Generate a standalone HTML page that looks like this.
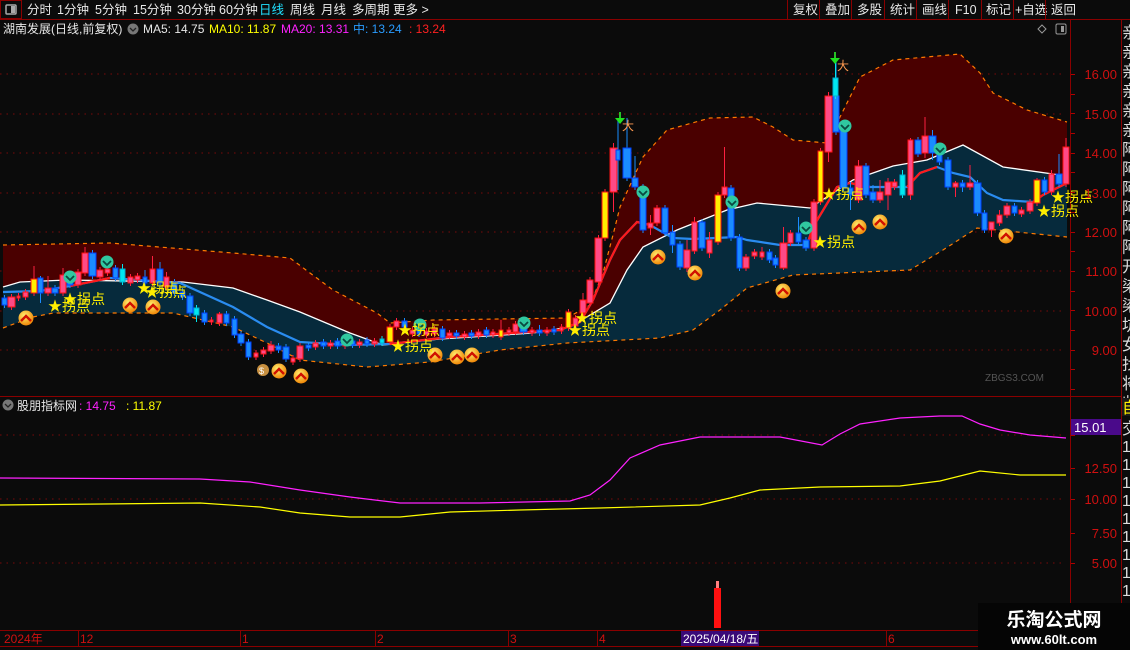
<!DOCTYPE html>
<html><head><meta charset="utf-8"><style>
html,body{margin:0;padding:0;background:#0b0b0b;width:1130px;height:650px;overflow:hidden}
svg{display:block}
text{font-family:"Liberation Sans","Noto Sans CJK SC",sans-serif}
</style></head><body>
<svg id="s" width="1130" height="650" viewBox="0 0 1130 650" xmlns="http://www.w3.org/2000/svg">
<rect width="1130" height="650" fill="#0b0b0b"/>
<rect x="0.5" y="0.5" width="21" height="18" fill="none" stroke="#8a0000"/>
<rect x="6" y="5" width="10" height="9" fill="none" stroke="#aaa" stroke-width="1.5" rx="1"/><rect x="11" y="6" width="4" height="7" fill="#aaa"/>
<g font-size="12.5" fill="#e8e8e8">
<text x="27" y="14">分时</text><text x="57" y="14">1分钟</text><text x="95" y="14">5分钟</text><text x="133" y="14">15分钟</text><text x="177" y="14">30分钟</text><text x="219" y="14">60分钟</text>
<text x="259" y="14" fill="#20e0ff">日线</text><text x="290" y="14">周线</text><text x="321" y="14">月线</text><text x="352" y="14">多周期</text><text x="393" y="14">更多 &gt;</text>
<text x="793" y="14">复权</text><text x="825" y="14">叠加</text><text x="857" y="14">多股</text><text x="890" y="14">统计</text><text x="922" y="14">画线</text><text x="955" y="14">F10</text><text x="986" y="14">标记</text><text x="1015" y="14">+自选</text><text x="1051" y="14">返回</text>
</g>
<g stroke="#8a0000" fill="none">
<line x1="0" y1="19.5" x2="1130" y2="19.5"/>
<line x1="787.5" y1="0" x2="787.5" y2="19"/><line x1="819.5" y1="0" x2="819.5" y2="19"/><line x1="851.5" y1="0" x2="851.5" y2="19"/><line x1="884.5" y1="0" x2="884.5" y2="19"/><line x1="916.5" y1="0" x2="916.5" y2="19"/><line x1="948.5" y1="0" x2="948.5" y2="19"/><line x1="981.5" y1="0" x2="981.5" y2="19"/><line x1="1013.5" y1="0" x2="1013.5" y2="19"/><line x1="1045.5" y1="0" x2="1045.5" y2="19"/>
<line x1="1070.5" y1="20" x2="1070.5" y2="630"/><line x1="1121.5" y1="20" x2="1121.5" y2="650"/>
<line x1="0" y1="396.5" x2="1121" y2="396.5"/>
<line x1="0" y1="630.5" x2="1121" y2="630.5"/><line x1="0" y1="646.5" x2="1121" y2="646.5"/>
</g>
<g font-size="12">
<text x="3" y="33" fill="#e8e8e8">湖南发展(日线,前复权)</text>
<circle cx="133" cy="29" r="5.5" fill="#777"/><path d="M130 28l3 3 3-3" stroke="#222" fill="none" stroke-width="1.3"/>
<text x="143" y="33" fill="#e8e8e8">MA5: 14.75</text><text x="209" y="33" fill="#ffff00">MA10: 11.87</text><text x="281" y="33" fill="#ff22ff">MA20: 13.31</text><text x="353" y="33" fill="#2a9cff">中: 13.24</text><text x="409" y="33" fill="#ff2020">: 13.24</text>
</g>
<path d="M1042 25l4 4-4 4-4-4z" stroke="#999" fill="none"/>
<rect x="1056" y="24" width="10" height="10" fill="none" stroke="#999" rx="1.5"/><rect x="1061" y="26" width="3" height="6" fill="#999"/>
<g stroke="#7a0a0a" stroke-dasharray="1.5 5" stroke-width="1">
<line x1="0" y1="74" x2="1066" y2="74"/><line x1="0" y1="114" x2="1066" y2="114"/><line x1="0" y1="153" x2="1066" y2="153"/><line x1="0" y1="193" x2="1066" y2="193"/><line x1="0" y1="232" x2="1066" y2="232"/><line x1="0" y1="271" x2="1066" y2="271"/><line x1="0" y1="311" x2="1066" y2="311"/><line x1="0" y1="350" x2="1066" y2="350"/>
<line x1="0" y1="435" x2="1066" y2="435"/><line x1="0" y1="499" x2="1066" y2="499"/><line x1="0" y1="563" x2="1066" y2="563"/>
</g>
<polygon fill="#4a0000" points="3,245 110,243 233,253 290,258 310,273 333,290 377,313 390,323 433,320 567,318 590,305 603,273 613,235 620,207 643,157 667,130 710,118 753,117 773,127 793,140 827,143 840,117 860,77 893,60 960,54 980,73 993,93 1027,110 1067,122 1067,176 1003,167 963,145 927,160 893,166 853,180 810,208 757,203 727,210 677,230 643,247 627,270 610,303 570,327 533,333 440,339 383,345 350,333 300,312 267,300 233,288 183,282 67,280 20,282 3,287"/>
<polygon fill="#062a3c" points="3,287 20,282 67,280 183,282 233,288 267,300 300,312 350,333 383,345 440,339 533,333 570,327 610,303 627,270 643,247 677,230 727,210 757,203 810,208 853,180 893,166 927,160 963,145 1003,167 1067,176 1067,237 977,228 943,250 910,270 793,275 747,288 720,310 693,330 660,338 567,343 500,350 430,362 367,367 300,360 267,343 233,327 173,313 53,313 33,317 3,328"/>
<g fill="none" stroke="#ff7a00" stroke-dasharray="4 4" stroke-width="1.2">
<polyline points="3,245 110,243 233,253 290,258 310,273 333,290 377,313 390,323 433,320 567,318 590,305 603,273 613,235 620,207 643,157 667,130 710,118 753,117 773,127 793,140 827,143 840,117 860,77 893,60 960,54 980,73 993,93 1027,110 1067,122"/>
<polyline points="3,328 33,317 53,313 173,313 233,327 267,343 300,360 367,367 430,362 500,350 567,343 660,338 693,330 720,310 747,288 793,275 910,270 943,250 977,228 1067,237"/>
</g>
<polyline fill="none" stroke="#fff" stroke-width="1.3" points="3,287 20,282 67,280 183,282 233,288 267,300 300,312 350,333 383,345 440,339 533,333 570,327 610,303 627,270 643,247 677,230 727,210 757,203 810,208 853,180 893,166 927,160 963,145 1003,167 1067,176"/>
<polyline fill="none" stroke="#2a8cf0" stroke-width="2.2" points="3,292 40,291 70,286 110,278 180,283 233,307 267,327 300,342 350,345 390,344 450,337 560,330 580,322 593,300 610,260 620,240 637,222 650,225 673,238 693,239 737,237 747,240 780,245 807,245 813,227 837,187 850,183 870,187 907,187 920,173 937,167 953,173 970,177 987,193 1003,200 1033,202 1043,195 1067,183"/>
<g fill="none" stroke="#ff1a1a" stroke-width="2.2">
<polyline points="70,286 110,278"/>
<polyline points="390,344 450,337 560,330 580,322 593,300 610,260 620,240 637,222 650,225"/>
<polyline points="807,245 813,227 837,187 850,183 870,187"/>
<polyline points="907,187 920,173 937,167"/>
<polyline points="1033,202 1043,195 1067,183"/>
</g>
<g id="candles"></g>
<g id="icons"></g>
<g font-size="14" fill="#ffee00" id="lbl"></g>
<text x="985" y="381" font-size="10" fill="#555">ZBGS3.COM</text>
<g font-size="13" fill="#d01010" text-anchor="end">
<text x="1117" y="79">16.00</text><text x="1117" y="119">15.00</text><text x="1117" y="158">14.00</text><text x="1117" y="198">13.00</text><text x="1117" y="237">12.00</text><text x="1117" y="276">11.00</text><text x="1117" y="316">10.00</text><text x="1117" y="355">9.00</text>
<text x="1117" y="473">12.50</text><text x="1117" y="504">10.00</text><text x="1117" y="538">7.50</text><text x="1117" y="568">5.00</text>
</g>
<g stroke="#b00000" id="ticks"></g>
<g font-size="16" fill="#ddd" id="rc"></g>
<rect x="1122" y="398" width="8" height="18" fill="#1a1a1a"/><text x="1122" y="413" font-size="16" fill="#ffee00">自</text>
<circle cx="8" cy="405" r="5.5" fill="#777"/><path d="M5 404l3 3 3-3" stroke="#222" fill="none" stroke-width="1.3"/>
<text x="17" y="410" font-size="12" fill="#e8e8e8">股朋指标网</text><text x="79" y="410" font-size="12" fill="#ff22ff">: 14.75</text><text x="126" y="410" font-size="12" fill="#ffff00">: 11.87</text>
<polyline fill="none" stroke="#ff22ff" stroke-width="1.2" points="0,478 200,479 250,482 300,490 350,497 400,503 480,503 570,501 590,495 610,480 630,458 660,445 700,437 780,437 822,445 840,434 860,424 900,418 940,416 962,416 980,424 1000,430 1030,435 1066,438"/>
<polyline fill="none" stroke="#ffff00" stroke-width="1.2" points="0,505 200,503 260,507 300,513 350,517 400,517 450,512 520,510 600,508 700,505 730,498 760,490 820,487 900,486 940,481 980,471 1020,475 1066,475"/>
<rect x="1071" y="419" width="50" height="16" fill="#4a0a8a"/><text x="1074" y="432" font-size="13" fill="#fff">15.01</text>
<rect x="714" y="588" width="7" height="40" fill="#ff1010"/><rect x="716" y="581" width="3" height="7" fill="#ff8080"/>
<g stroke="#8a0000"><line x1="78.5" y1="631" x2="78.5" y2="646"/><line x1="240.5" y1="631" x2="240.5" y2="646"/><line x1="375.5" y1="631" x2="375.5" y2="646"/><line x1="508.5" y1="631" x2="508.5" y2="646"/><line x1="597.5" y1="631" x2="597.5" y2="646"/><line x1="886.5" y1="631" x2="886.5" y2="646"/></g>
<g font-size="12" fill="#d01010"><text x="4" y="643">2024年</text><text x="80" y="643">12</text><text x="242" y="643">1</text><text x="377" y="643">2</text><text x="510" y="643">3</text><text x="599" y="643">4</text><text x="888" y="643">6</text></g>
<rect x="681" y="631" width="78" height="15" fill="#3a0a78"/><text x="683" y="643" font-size="12" fill="#fff">2025/04/18/五</text>
<rect x="978" y="603" width="152" height="47" fill="#050505"/>
<text x="1054" y="626" text-anchor="middle" font-size="19" font-weight="bold" fill="#fff" font-family="'Noto Serif CJK SC','Liberation Serif',serif">乐淘公式网</text>
<text x="1054" y="644" text-anchor="middle" font-size="13" font-weight="bold" fill="#fff" font-family="'Liberation Serif',serif">www.60lt.com</text>
</svg>
<script>
var NS="http://www.w3.org/2000/svg";
function el(p,t,a){var e=document.createElementNS(NS,t);for(var k in a)e.setAttribute(k,a[k]);p.appendChild(e);return e;}
var C={r:['#ff4a86','#ff1010'],b:['#1a8cff','#0040ff'],c:['#00e8f0','#00b0d0'],y:['#ffee00','#ff1010']};
var D=[[2,7,298,305,'b'],[8,15,297,307,'r'],[17,20,296,298,'r'],[23,28,292,297,'r'],[31,37,279,293,'y',266],[38,43,278,293,'b',276,303],[45,51,288,293,'r',276],[52,58,288,293,'b'],[60,66,275,293,'r',268],[67,73,275,285,'b'],[75,81,272,285,'r'],[82,88,253,273,'r',247],[89,96,253,276,'b'],[97,103,270,277,'r'],[105,110,269,273,'r'],[113,118,268,278,'b'],[120,125,269,282,'c',264],[128,133,277,283,'r'],[135,140,276,280,'r'],[143,147,277,283,'b',270],[150,155,269,283,'r',256],[157,163,269,283,'b',262],[164,169,277,287,'r',272],[172,177,282,293,'b'],[180,185,292,297,'b',288],[187,193,296,313,'b'],[194,199,308,315,'c',305,322],[202,207,313,322,'b'],[210,213,320,322,'r'],[217,222,314,323,'r',312],[224,229,314,323,'b'],[232,237,319,335,'b'],[238,244,334,343,'b'],[246,251,342,357,'b'],[254,258,353,357,'r'],[261,266,350,354,'r'],[268,274,345,351,'r',341],[276,281,346,350,'b',343],[283,289,347,359,'b'],[291,295,358,362,'r'],[297,303,346,359,'r'],[306,311,345,348,'b'],[313,318,343,347,'r'],[321,326,342,346,'b'],[328,333,343,346,'r'],[335,340,341,346,'b'],[343,347,342,346,'r'],[350,355,341,345,'b'],[357,362,342,345,'r'],[365,369,340,344,'b'],[372,377,341,344,'r'],[380,384,339,343,'c'],[387,393,327,342,'y'],[394,399,321,327,'r',318],[402,407,321,327,'b'],[410,415,330,334,'r'],[417,421,330,334,'b'],[424,429,331,335,'r'],[432,437,329,334,'r'],[440,445,329,338,'b',326],[447,452,333,336,'r'],[454,459,333,336,'b'],[462,467,334,337,'r'],[469,474,333,336,'b'],[476,481,332,336,'r'],[484,489,330,335,'b'],[491,495,332,335,'r'],[499,503,330,337,'y',320],[507,511,330,333,'r'],[513,518,324,332,'r'],[520,527,324,332,'b'],[530,534,330,333,'r'],[537,542,330,333,'b',325],[545,549,330,333,'r'],[552,556,329,332,'b'],[560,563,327,331,'r'],[566,571,312,328,'y'],[573,578,318,326,'r'],[580,586,300,313,'r',293],[587,593,280,303,'r',277],[595,602,238,282,'r'],[602,608,192,238,'y'],[610,617,148,192,'r',143,212],[616,620,150,160,'b',118,190],[623,631,148,178,'b',118],[632,638,178,187,'b',156],[640,646,187,230,'b'],[648,653,223,228,'r',215,235],[654,660,208,223,'r'],[662,668,208,233,'b'],[670,675,232,245,'b',225,253],[677,683,244,267,'b'],[684,690,250,268,'r',240,272],[692,697,222,251,'r',217],[699,705,222,248,'b'],[707,712,240,253,'r',232,258],[715,721,195,242,'y'],[722,727,187,195,'r',147],[728,734,188,238,'b'],[737,742,237,268,'b'],[743,749,257,268,'r'],[752,757,252,256,'r'],[760,764,252,257,'r',247],[767,772,252,260,'b'],[773,778,258,265,'b'],[780,787,243,268,'r',227,270],[788,793,233,243,'r'],[796,801,233,242,'b',217],[803,809,240,248,'b'],[811,817,202,248,'r'],[818,823,151,202,'y'],[825,832,96,152,'r',92,162],[833,839,96,132,'b',58],[833,838,78,96,'c',58],[840,847,130,188,'b'],[848,853,188,195,'b',182,210],[855,862,166,200,'r',160,203],[863,869,166,195,'b'],[870,876,192,200,'b',185],[877,883,192,200,'r',180],[885,891,182,195,'r',178,210],[892,897,182,187,'r',179],[900,905,175,195,'c',170,198],[908,913,140,195,'r',138,200],[915,921,140,154,'b',137],[922,928,136,153,'r',117,158],[929,936,136,153,'b',130,160],[937,942,151,162,'b',145],[945,951,160,187,'b'],[953,958,183,187,'r',181,197],[960,965,183,187,'b',180,192],[967,973,183,187,'r',165],[974,981,183,213,'b'],[982,987,213,230,'b'],[989,994,222,230,'r',222,237],[997,1002,215,223,'r',210],[1004,1010,206,215,'r'],[1012,1017,206,213,'b',203,216],[1019,1024,210,214,'r'],[1027,1033,202,211,'r'],[1034,1040,180,203,'y',178],[1042,1047,180,192,'b'],[1049,1054,174,192,'r',170],[1056,1062,174,184,'b',154],[1063,1069,147,184,'r',138]];
var g=document.getElementById('candles');
D.forEach(function(d){var c=C[d[4]],cx=(d[0]+d[1])/2,wt=d[5]||d[2]-3,wb=d[6]||d[3]+3;
el(g,'line',{x1:cx,x2:cx,y1:wt,y2:wb,stroke:c[1]=='#ff1010'?'#ff2040':c[0],'stroke-width':1});
el(g,'rect',{x:d[0],y:d[2],width:d[1]-d[0],height:Math.max(2,d[3]-d[2]),fill:c[0],stroke:c[1],'stroke-width':1});});
var ic=document.getElementById('icons');
var defs=el(ic,'defs',{});var lg=el(defs,'radialGradient',{id:'og',cx:'0.4',cy:'0.35',r:'0.7'});
el(lg,'stop',{offset:'0','stop-color':'#fff070'});el(lg,'stop',{offset:'1','stop-color':'#f08000'});
[[26,318],[130,305],[153,307],[279,371],[301,376],[435,355],[457,357],[472,355],[658,257],[695,273],[783,291],[859,227],[880,222],[1006,236]].forEach(function(p){
el(ic,'circle',{cx:p[0],cy:p[1],r:7.5,fill:'url(#og)'});
el(ic,'path',{d:'M'+(p[0]-5)+' '+(p[1]+3)+'l5-5 5 5',stroke:'#d01000','stroke-width':2.4,fill:'none'});});
[[107,262],[70,277],[347,340],[420,325],[524,323],[643,192],[732,202],[806,228],[845,126],[940,149]].forEach(function(p){
el(ic,'circle',{cx:p[0],cy:p[1],r:6.5,fill:'#30c8a0'});
el(ic,'path',{d:'M'+(p[0]-4)+' '+(p[1]-1)+'l4 4 4-4',stroke:'#0a4a40','stroke-width':1.8,fill:'none'});});
el(ic,'circle',{cx:263,cy:370,r:6,fill:'#c89040'});el(ic,'text',{x:259,y:374,'font-size':9,fill:'#fff'}).textContent='$';
[[620,118],[835,58]].forEach(function(p){el(ic,'line',{x1:p[0],y1:p[1]-6,x2:p[0],y2:p[1]+5,stroke:'#30ff30','stroke-width':1.5});
el(ic,'path',{d:'M'+(p[0]-5)+' '+p[1]+'l5 6 5-6z',fill:'#20e020'});
el(ic,'text',{x:p[0]+2,y:p[1]+12,'font-size':12,fill:'#ff9a50'}).textContent='大';});
var lb=document.getElementById('lbl');
[[48,311],[63,304],[137,293],[145,297],[391,351],[398,335],[568,335],[575,323],[813,247],[822,199],[1037,216],[1051,202]].forEach(function(p){
el(lb,'text',{x:p[0],y:p[1]}).textContent='★拐点';});
var tk=document.getElementById('ticks');
for(var y=74;y<395;y+=19.7){el(tk,'line',{x1:1071,x2:1075,y1:Math.round(y)+.5,y2:Math.round(y)+.5});}
[435,468,499,533,563].forEach(function(y){el(tk,'line',{x1:1071,x2:1075,y1:y+.5,y2:y+.5});});
var rc=document.getElementById('rc');var ch='亲亲亲亲亲亲阿阿阿阿阿阿开染染坑女找将收';
for(var i=0;i<ch.length;i++){el(rc,'text',{x:1122,y:38+i*19.5}).textContent=ch[i];}
['交','1','1','1','1','1','1','1','1','1','1','1'].forEach(function(c,i){el(rc,'text',{x:1122,y:434+i*18}).textContent=c;});
</script>
</body></html>
